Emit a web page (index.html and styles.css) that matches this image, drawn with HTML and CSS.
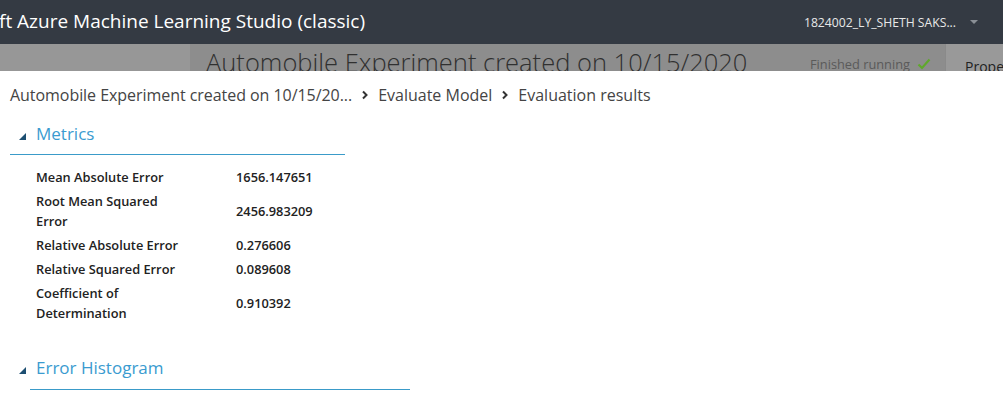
FILE: index.html
```html
<!DOCTYPE html>
<html>
<head>
<meta charset="utf-8">
<link rel="stylesheet" href="styles.css">
</head>
<body>
<header class="topbar">
  <div class="app-title">ft Azure Machine Learning Studio (classic)</div>
  <div class="user">
    <span class="user-name">1824002_LY_SHETH SAKS...</span>
    <span class="caret"></span>
  </div>
</header>
<div class="backdrop">
  <div class="bd-left"></div>
  <div class="bd-main">
    <div class="bd-title">Automobile Experiment created on 10/15/2020</div>
    <div class="bd-status">Finished running
      <svg class="check" width="14" height="12" viewBox="0 0 14 12"><path d="M1.5 6.5 L5 10 L12.5 1.5" fill="none" stroke="#5fa82c" stroke-width="2.2"/></svg>
    </div>
  </div>
  <div class="bd-right">Prope</div>
</div>
<main class="panel">
  <nav class="crumbs">
    <span class="crumb-first">Automobile Experiment created on 10/15/20...</span>
    <svg class="chev" width="8" height="10" viewBox="0 0 8 10"><path d="M2 1.5 L5.5 5 L2 8.5" fill="none" stroke="#333" stroke-width="2"/></svg>
    <span>Evaluate Model</span>
    <svg class="chev" width="8" height="10" viewBox="0 0 8 10"><path d="M2 1.5 L5.5 5 L2 8.5" fill="none" stroke="#333" stroke-width="2"/></svg>
    <span>Evaluation results</span>
  </nav>
  <section class="section metrics">
    <div class="sec-head">
      <svg class="tri" width="7" height="7" viewBox="0 0 7 7"><path d="M7 0 L7 7 L0 7 Z" fill="#1d4f72"/></svg>
      <span class="sec-title">Metrics</span>
    </div>
    <div class="metric-table">
      <div class="m-label">Mean Absolute Error</div><div class="m-value">1656.147651</div>
      <div class="m-label">Root Mean Squared Error</div><div class="m-value">2456.983209</div>
      <div class="m-label">Relative Absolute Error</div><div class="m-value">0.276606</div>
      <div class="m-label">Relative Squared Error</div><div class="m-value">0.089608</div>
      <div class="m-label">Coefficient of Determination</div><div class="m-value">0.910392</div>
    </div>
  </section>
  <section class="section hist">
    <div class="sec-head">
      <svg class="tri" width="7" height="7" viewBox="0 0 7 7"><path d="M7 0 L7 7 L0 7 Z" fill="#1d4f72"/></svg>
      <span class="sec-title">Error Histogram</span>
    </div>
  </section>
</main>
</body>
</html>
```
FILE: styles.css
```css
* { box-sizing: border-box; }
html, body { margin: 0; padding: 0; }
body {
  width: 1003px;
  height: 412px;
  overflow: hidden;
  background: #fff;
  font-family: "Open Sans", "Noto Sans", sans-serif;
  color: #333;
}
.topbar {
  height: 44px;
  background: #343a43;
  display: flex;
  align-items: center;
  justify-content: space-between;
  color: #fff;
}
.app-title {
  font-size: 19px;
  margin-left: -1px;
  margin-top: -2px;
  white-space: nowrap;
}
.user {
  display: flex;
  align-items: center;
  font-size: 12.2px;
  margin-right: 25px;
  color: #e8e8e8;
}
.caret {
  width: 0; height: 0;
  margin-left: 14px;
  border-left: 4px solid transparent;
  border-right: 4px solid transparent;
  border-top: 4px solid #8a8f96;
}
.backdrop {
  height: 27px;
  display: flex;
  overflow: hidden;
}
.bd-left { width: 190px; background: #979797; }
.bd-main {
  flex: 1;
  background: #8d8d8d;
  display: flex;
  justify-content: space-between;
  padding-left: 16px;
  padding-right: 14px;
}
.bd-title {
  font-size: 25.5px;
  font-weight: 300;
  color: #303030;
  line-height: 1;
  margin-top: 6px;
  white-space: nowrap;
}
.bd-status {
  font-size: 12.8px;
  color: #5a5a5a;
  margin-top: 11px;
  display: flex;
  align-items: flex-start;
  gap: 7px;
  white-space: nowrap;
}
.check { margin-top: 3px; }
.bd-right {
  width: 58px;
  background: #999;
  color: #222;
  font-size: 14px;
  padding-left: 19px;
  padding-top: 13px;
  white-space: nowrap;
  overflow: hidden;
  border-left: 1px solid #8a8a8a;
}
.panel {
  background: #fff;
}
.crumbs {
  height: 48px;
  display: flex;
  align-items: center;
  padding-left: 10px;
  font-size: 16px;
  color: #444;
  gap: 7px;
}
.crumb-first { letter-spacing: -0.05px; }
.chev { margin: 0 2px; }
.section .sec-head {
  position: relative;
  display: flex;
  align-items: center;
  height: 36px;
  border-bottom: 1px solid #3a9bc9;
}
.metrics .sec-head { margin-left: 10px; width: 335px; padding-left: 9px; }
.hist .sec-head { margin-left: 30px; width: 380px; margin-top: 29px; }
.tri { flex: none; }
.hist .tri { position: absolute; left: -11px; top: 13px; }
.sec-title {
  font-size: 17px;
  color: #3a9bd0;
  margin-left: 10px;
  margin-top: -6px;
}
.hist .sec-title { margin-left: 6px; margin-top: -8px; }
.metric-table {
  display: grid;
  grid-template-columns: 150px auto;
  column-gap: 50px;
  padding-left: 36px;
  margin-top: 10px;
  font-size: 12.8px;
  font-weight: 600;
  color: #222;
  line-height: 20px;
}
.m-label, .m-value {
  padding: 2px 0;
  display: flex;
  align-items: center;
}
```
